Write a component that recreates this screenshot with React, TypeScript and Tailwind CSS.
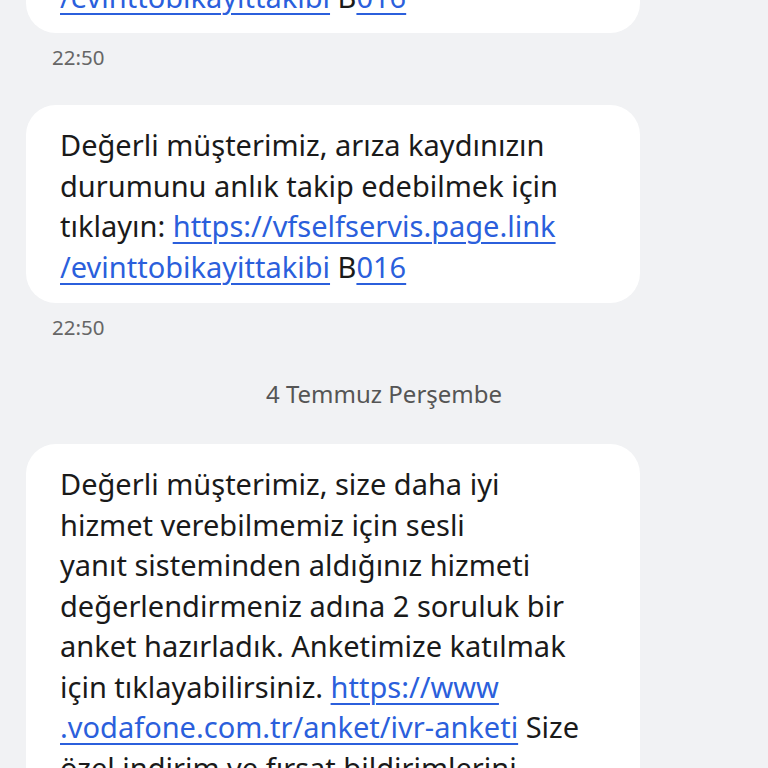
import React from 'react';

const font = { fontFamily: '"Noto Sans", "Open Sans", sans-serif' };

function Link({ children }: { children: React.ReactNode }) {
  return <span className="text-[#2b5fdc] underline underline-offset-[5px] decoration-[1.5px]">{children}</span>;
}

function Bubble({ children, className = '' }: { children: React.ReactNode; className?: string }) {
  return (
    <div
      className={`ml-[26px] w-[614px] rounded-[30px] bg-white pl-[34px] pr-[20px] pt-[20px] pb-[16px] text-[29px] leading-[40.5px] text-[#1a1a1a] whitespace-nowrap ${className}`}
    >
      {children}
    </div>
  );
}

function Time() {
  return <div className="ml-[52px] mt-[12px] text-[20.5px] leading-[24px] text-[#666]">22:50</div>;
}

function ArizaText() {
  return (
    <>
      Değerli müşterimiz, arıza kaydınızın
      <br />
      durumunu anlık takip edebilmek için
      <br />
      tıklayın: <Link>https://vfselfservis.page.link</Link>
      <br />
      <Link>/evinttobikayittakibi</Link> B<Link>016</Link>
    </>
  );
}

export default function App() {
  return (
    <div className="h-[768px] w-[768px] overflow-hidden bg-[#f1f2f4]" style={font}>
      <Bubble className="-mt-[165px]">
        <ArizaText />
      </Bubble>
      <Time />
      <Bubble className="mt-[36px]">
        <ArizaText />
      </Bubble>
      <Time />
      <div className="mt-[40px] text-center text-[24px] leading-[30px] text-[#555]">4 Temmuz Perşembe</div>
      <Bubble className="mt-[35px]">
        Değerli müşterimiz, size daha iyi
        <br />
        hizmet verebilmemiz için sesli
        <br />
        yanıt sisteminden aldığınız hizmeti
        <br />
        değerlendirmeniz adına 2 soruluk bir
        <br />
        anket hazırladık. Anketimize katılmak
        <br />
        için tıklayabilirsiniz. <Link>https://www</Link>
        <br />
        <Link>.vodafone.com.tr/anket/ivr-anketi</Link> Size
        <br />
        özel indirim ve fırsat bildirimlerini
        <br />
        almak için
      </Bubble>
    </div>
  );
}
